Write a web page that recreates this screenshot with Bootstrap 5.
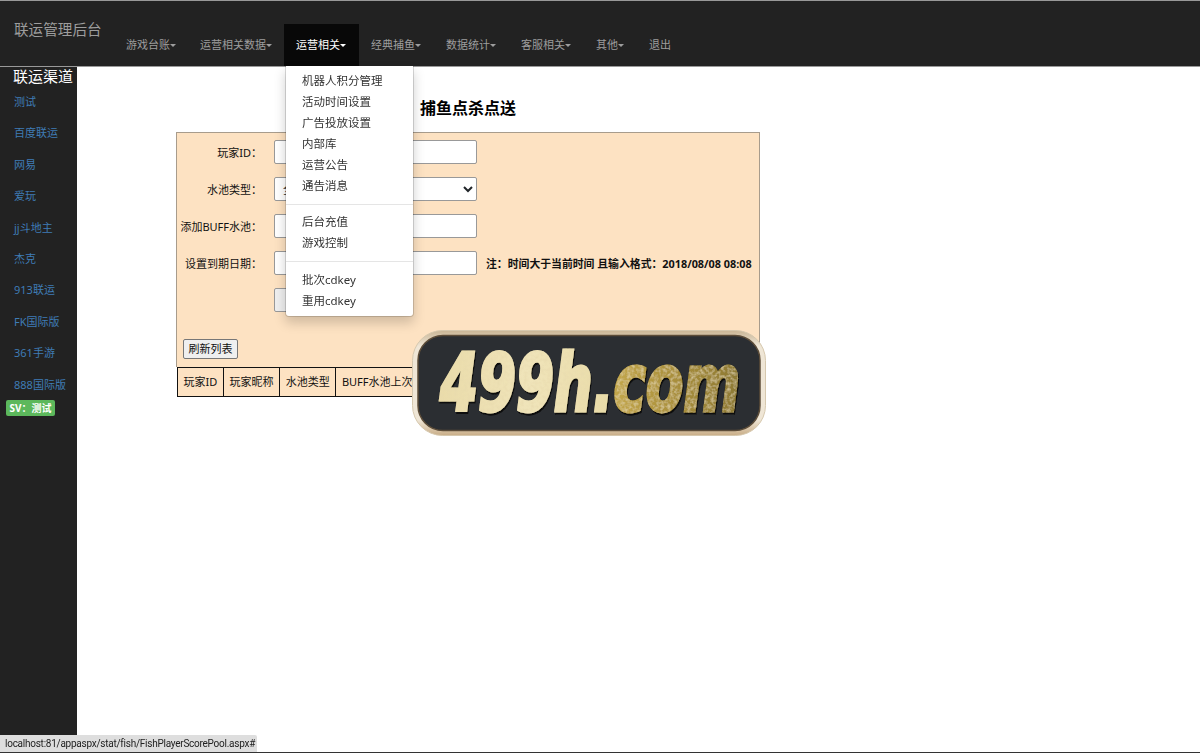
<!DOCTYPE html>
<html lang="zh-CN">
<head>
  <meta charset="UTF-8">
  <meta name="viewport" content="width=device-width, initial-scale=1.0">
  <title>联运管理后台</title>
  <link href="https://cdn.jsdelivr.net/npm/bootstrap@5.3.0/dist/css/bootstrap.min.css" rel="stylesheet">
  <style>
    body {
      font-family: "Noto Sans", "Noto Sans CJK SC", sans-serif;
      font-size: 11px;
      color: #111;
      background-color: #fff;
      overflow: hidden;
    }
    .app-shell { height: 753px; border-bottom: 1px solid #333; }
    .top-bar {
      height: 67px;
      background-color: #222;
      border-top: 1px solid #999;
      border-bottom: 1px solid #999;
      flex-shrink: 0;
    }
    .top-brand {
      width: 114px;
      padding: 17px 0 0 14px;
      font-size: 14.6px;
      line-height: 22px;
      color: #9d9d9d;
      white-space: nowrap;
    }
    .top-bar .navbar-nav .nav-link {
      padding: 12px;
      font-size: 11px;
      line-height: 18px;
      color: #9d9d9d;
    }
    .top-bar .navbar-nav .dropdown ~ .nav-item .nav-link { padding-right: 13px; }
    .top-bar .nav-link.dropdown-toggle::after {
      margin-left: 0;
      vertical-align: 2px;
      border-top-width: 3px;
      border-left-width: 3.45px;
      border-right-width: 3.45px;
    }
    .top-bar .navbar-nav .nav-link.is-open { padding-right: 13px; background-color: #080808; color: #fff; }
    .top-menu.dropdown-menu {
      top: 100%;
      left: 1px;
      width: 129px;
      min-width: 0;
      margin: 0;
      padding: 4px 0 5.5px;
      border: 1px solid rgba(0, 0, 0, .15);
      border-top: 0;
      border-radius: 0 0 4px 4px;
      box-shadow: 0 6px 12px rgba(0, 0, 0, .175);
      font-size: 11.5px;
    }
    .top-menu .dropdown-item { padding: 0 16px; line-height: 21px; color: #333; }
    .top-menu .dropdown-divider { margin: 7.5px 0 6.75px; border-color: #e5e5e5; }
    .side-bar { width: 77px; background-color: #222; flex-shrink: 0; }
    .side-title { padding-left: 13px; font-size: 15px; line-height: 19px; color: #fff; }
    .side-link {
      display: block;
      padding-left: 14px;
      height: 31.4px;
      line-height: 31.4px;
      font-size: 11px;
      color: #3f7cb5;
      text-decoration: none;
      white-space: nowrap;
    }
    .sv-tag {
      display: block;
      width: 49px;
      margin: 0 0 0 6px;
      padding: 0;
      height: 16px;
      line-height: 16px;
      font-size: 10px;
      border-radius: 2px;
      background-color: #5cb85c;
    }
    .work-area { width: 584px; margin-left: 99px; }
    .work-title { margin: 30px 0 13px; font-size: 16px; line-height: 22px; font-weight: 700; color: #000; }
    .peach-panel {
      height: 235px;
      padding: 7px 6px 7px 0;
      background-color: #fde2c2;
      border: 1px solid #a89c8c;
      border-bottom: 0;
    }
    .form-line { height: 24px; margin-bottom: 13px; }
    .form-line label { width: 85px; padding-top: 2px; margin-right: 12px; margin-bottom: 0; text-align: right; flex-shrink: 0; white-space: nowrap; }
    .peach-panel .form-control,
    .peach-panel .form-select {
      width: 203px;
      height: 24px;
      min-height: 0;
      padding: 0 4px;
      font-size: 11px;
      border: 1px solid #999;
      border-radius: 2px;
      flex-shrink: 0;
    }
    .peach-panel .form-select { appearance: auto; background-image: none; }
    .form-note { margin-left: 9px; padding-top: 3px; font-size: 10.85px; font-weight: 700; white-space: nowrap; }
    .plain-btn {
      height: 24px;
      width: 62px;
      padding: 0;
      font-size: 11px;
      background-color: #efefef;
      border: 1px solid #999;
      border-radius: 2px;
    }
    .refresh-btn {
      display: block;
      height: 20px;
      width: 55px;
      margin: 27px 0 0 6px;
      padding: 0;
      font-size: 11px;
      color: #111;
      background-color: #efefef;
      border: 1px solid #777;
      border-radius: 2px;
    }
    .pool-table { margin-left: 1px; height: 30px; background-color: #fde2c2; border-collapse: collapse; }
    .pool-table th { padding: 0 5.6px; font-weight: 400; border: 1px solid #111; white-space: nowrap; }
    .logo-mark { position: fixed; left: 411px; top: 329px; display: block; }
    .status-tip {
      position: fixed;
      left: 0;
      bottom: 1px;
      height: 17px;
      width: 257px;
      padding-left: 5px;
      font-family: Roboto, sans-serif;
      font-size: 10px;
      letter-spacing: -.25px;
      line-height: 17px;
      color: #222;
      background-color: #dedede;
      border-top-right-radius: 2px;
      white-space: nowrap;
    }
  </style>
</head>
<body>
  <div class="app-shell d-flex flex-column">
    <nav class="top-bar navbar navbar-expand p-0 align-items-stretch justify-content-start flex-nowrap">
      <div class="top-brand">联运管理后台</div>
      <ul class="navbar-nav align-items-end">
        <li class="nav-item"><a class="nav-link dropdown-toggle" href="#">游戏台账</a></li>
        <li class="nav-item"><a class="nav-link dropdown-toggle" href="#">运营相关数据</a></li>
        <li class="nav-item dropdown">
          <a class="nav-link dropdown-toggle is-open" href="#">运营相关</a>
          <ul class="top-menu dropdown-menu show">
            <li><a class="dropdown-item" href="#">机器人积分管理</a></li>
            <li><a class="dropdown-item" href="#">活动时间设置</a></li>
            <li><a class="dropdown-item" href="#">广告投放设置</a></li>
            <li><a class="dropdown-item" href="#">内部库</a></li>
            <li><a class="dropdown-item" href="#">运营公告</a></li>
            <li><a class="dropdown-item" href="#">通告消息</a></li>
            <li><hr class="dropdown-divider"></li>
            <li><a class="dropdown-item" href="#">后台充值</a></li>
            <li><a class="dropdown-item" href="#">游戏控制</a></li>
            <li><hr class="dropdown-divider"></li>
            <li><a class="dropdown-item" href="#">批次cdkey</a></li>
            <li><a class="dropdown-item" href="#">重用cdkey</a></li>
          </ul>
        </li>
        <li class="nav-item"><a class="nav-link dropdown-toggle" href="#">经典捕鱼</a></li>
        <li class="nav-item"><a class="nav-link dropdown-toggle" href="#">数据统计</a></li>
        <li class="nav-item"><a class="nav-link dropdown-toggle" href="#">客服相关</a></li>
        <li class="nav-item"><a class="nav-link dropdown-toggle" href="#">其他</a></li>
        <li class="nav-item"><a class="nav-link" href="#">退出</a></li>
      </ul>
    </nav>

    <div class="d-flex flex-grow-1">
      <aside class="side-bar">
        <div class="side-title">联运渠道</div>
        <a class="side-link" href="#">测试</a>
        <a class="side-link" href="#">百度联运</a>
        <a class="side-link" href="#">网易</a>
        <a class="side-link" href="#">爱玩</a>
        <a class="side-link" href="#">jj斗地主</a>
        <a class="side-link" href="#">杰克</a>
        <a class="side-link" href="#">913联运</a>
        <a class="side-link" href="#">FK国际版</a>
        <a class="side-link" href="#">361手游</a>
        <a class="side-link" href="#">888国际版</a>
        <span class="sv-tag badge">SV：测试</span>
      </aside>

      <main class="work-area">
        <h1 class="work-title text-center">捕鱼点杀点送</h1>
        <div class="peach-panel">
          <div class="form-line d-flex align-items-center">
            <label for="playerId">玩家ID：</label>
            <input id="playerId" class="form-control" type="text">
          </div>
          <div class="form-line d-flex align-items-center">
            <label for="poolType">水池类型：</label>
            <select id="poolType" class="form-select"><option>全部</option></select>
          </div>
          <div class="form-line d-flex align-items-center">
            <label for="buffPool">添加BUFF水池：</label>
            <input id="buffPool" class="form-control" type="text">
          </div>
          <div class="form-line d-flex align-items-center">
            <label for="endDate">设置到期日期：</label>
            <input id="endDate" class="form-control" type="text">
            <span class="form-note">注：时间大于当前时间 且输入格式：2018/08/08 08:08</span>
          </div>
          <div class="form-line d-flex align-items-center">
            <label></label>
            <button class="plain-btn" type="button" aria-label="确定"></button>
          </div>
          <button class="refresh-btn" type="button">刷新列表</button>
        </div>
        <table class="pool-table">
          <tr>
            <th>玩家ID</th>
            <th>玩家昵称</th>
            <th>水池类型</th>
            <th>BUFF水池上次设置</th>
          </tr>
        </table>
      </main>
    </div>
  </div>

  <svg class="logo-mark" width="356" height="108" viewBox="0 0 356 108">
    <defs>
      <linearGradient id="logoRim" x1="0" y1="0" x2="0" y2="1">
        <stop offset="0" stop-color="#c9b595"/>
        <stop offset=".15" stop-color="#efe6d6"/>
        <stop offset=".85" stop-color="#efe6d6"/>
        <stop offset="1" stop-color="#c9ad87"/>
      </linearGradient>
      <linearGradient id="logoFill" gradientUnits="userSpaceOnUse" x1="28" y1="0" x2="330" y2="0">
        <stop offset="0" stop-color="#eadcaa"/>
        <stop offset=".3" stop-color="#f0e4ba"/>
        <stop offset=".56" stop-color="#e9dca8"/>
        <stop offset=".57" stop-color="#c4a84c"/>
        <stop offset=".78" stop-color="#a98f3c"/>
        <stop offset="1" stop-color="#8c7833"/>
      </linearGradient>
      <filter id="logoGrain" x="-5%" y="-10%" width="110%" height="125%">
        <feTurbulence type="fractalNoise" baseFrequency=".3" numOctaves="2" seed="4" result="noise"/>
        <feColorMatrix in="noise" type="matrix" values="0 0 0 0 .8  0 0 0 0 .7  0 0 0 0 .42  0 0 0 1.4 -.55" result="spots"/>
        <feComposite in="spots" in2="SourceAlpha" operator="in" result="grain"/>
        <feDropShadow in="SourceAlpha" dx="1" dy="2" stdDeviation="0" flood-color="#0c0c0c" result="shade"/>
        <feMerge>
          <feMergeNode in="shade"/>
          <feMergeNode in="SourceGraphic"/>
          <feMergeNode in="grain"/>
        </feMerge>
      </filter>
    </defs>
    <rect x="1.5" y="1.5" width="353" height="105" rx="30" fill="url(#logoRim)" stroke="#d6c8ae"/>
    <rect x="7" y="6.5" width="342" height="95" rx="25" fill="#2b2e32" stroke="#5c4c38" stroke-width="1.5"/>
    <text x="29" y="82" font-family="DejaVu Sans" font-stretch="condensed" font-weight="700" font-style="italic" font-size="80" textLength="300" lengthAdjust="spacingAndGlyphs" fill="url(#logoFill)" stroke="url(#logoFill)" stroke-width="3" filter="url(#logoGrain)">499h.com</text>
  </svg>

  <div class="status-tip">localhost:81/appaspx/stat/fish/FishPlayerScorePool.aspx#</div>

  <script src="https://cdn.jsdelivr.net/npm/bootstrap@5.3.0/dist/js/bootstrap.bundle.min.js"></script>
</body>
</html>
